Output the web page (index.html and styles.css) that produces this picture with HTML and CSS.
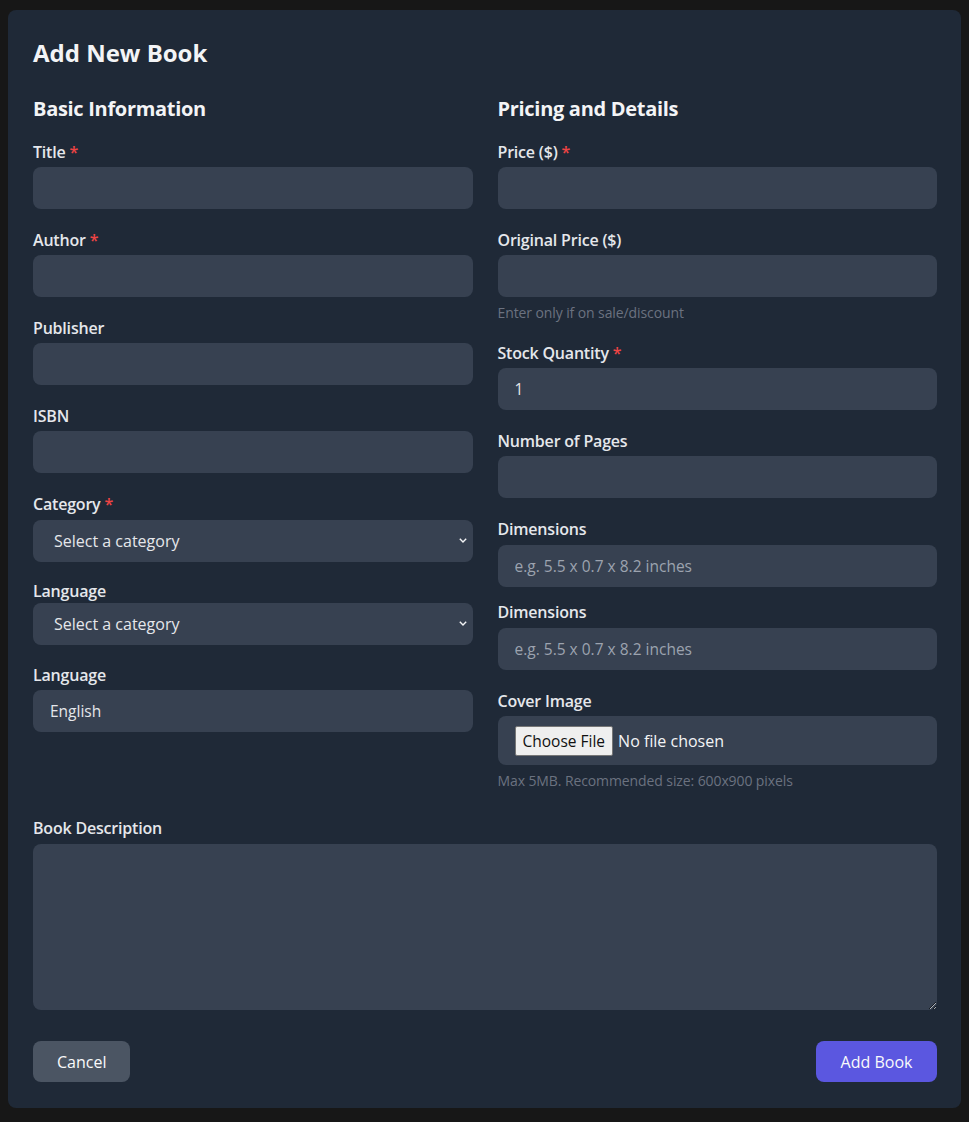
FILE: index.html
```html
<!DOCTYPE html>
<html lang="en">
<head>
<meta charset="utf-8">
<title>Add New Book</title>
<link rel="stylesheet" href="styles.css">
</head>
<body>
<div class="card">
  <h1 class="title">Add New Book</h1>
  <form class="form">
    <div class="cols">
      <div class="col">
        <h2 class="section">Basic Information</h2>
        <div class="field">
          <label class="label">Title <span class="req">*</span></label>
          <input class="input" type="text">
        </div>
        <div class="field">
          <label class="label">Author <span class="req">*</span></label>
          <input class="input" type="text">
        </div>
        <div class="field">
          <label class="label">Publisher</label>
          <input class="input" type="text">
        </div>
        <div class="field">
          <label class="label">ISBN</label>
          <input class="input" type="text">
        </div>
        <div class="field f-cat">
          <label class="label">Category <span class="req">*</span></label>
          <select class="select"><option>Select a category</option></select>
        </div>
        <div class="field f-lang1">
          <label class="label">Language</label>
          <select class="select"><option>Select a category</option></select>
        </div>
        <div class="field f-lang2">
          <label class="label">Language</label>
          <input class="input" type="text" value="English">
        </div>
      </div>
      <div class="col">
        <h2 class="section">Pricing and Details</h2>
        <div class="field">
          <label class="label">Price ($) <span class="req">*</span></label>
          <input class="input" type="text">
        </div>
        <div class="field f-orig">
          <label class="label">Original Price ($)</label>
          <input class="input" type="text">
          <p class="help">Enter only if on sale/discount</p>
        </div>
        <div class="field">
          <label class="label">Stock Quantity <span class="req">*</span></label>
          <input class="input" type="text" value="1">
        </div>
        <div class="field">
          <label class="label">Number of Pages</label>
          <input class="input" type="text">
        </div>
        <div class="field f-dim1">
          <label class="label">Dimensions</label>
          <input class="input" type="text" placeholder="e.g. 5.5 x 0.7 x 8.2 inches">
        </div>
        <div class="field f-dim2">
          <label class="label">Dimensions</label>
          <input class="input" type="text" placeholder="e.g. 5.5 x 0.7 x 8.2 inches">
        </div>
        <div class="field f-cover">
          <label class="label">Cover Image</label>
          <input class="input file" type="file">
          <p class="help help-cover">Max 5MB. Recommended size: 600x900 pixels</p>
        </div>
      </div>
    </div>
    <div class="field f-desc">
      <label class="label">Book Description</label>
      <textarea class="textarea"></textarea>
    </div>
    <div class="actions">
      <button type="button" class="btn btn-cancel">Cancel</button>
      <button type="button" class="btn btn-primary">Add Book</button>
    </div>
  </form>
</div>
</body>
</html>
```

FILE: styles.css
```css
* { box-sizing: border-box; }
html, body { margin: 0; padding: 0; }
body {
  background: #171717;
  font-family: "Open Sans", "Noto Sans", sans-serif;
  color: #e5e7eb;
  padding: 10px 8px 14px 8px;
}
.card {
  background: #1f2937;
  border-radius: 8px;
  padding: 27px 24px 26px 25px;
}
.title {
  margin: 0 0 26px 0;
  font-size: 24px;
  line-height: 32px;
  font-weight: 700;
  color: #f3f4f6;
}
.section {
  margin: 0 0 17px 0;
  font-size: 20px;
  line-height: 28px;
  font-weight: 700;
  color: #f3f4f6;
  letter-spacing: -0.3px;
}
.cols {
  display: grid;
  grid-template-columns: 1fr 1fr;
  column-gap: 25px;
}
.col { display: flex; flex-direction: column; }
.field {
  display: flex;
  flex-direction: column;
  margin-bottom: 19px;
}
.label {
  display: block;
  font-size: 16px;
  line-height: 24px;
  font-weight: 600;
  color: #e5e7eb;
  margin-bottom: 3px;
  letter-spacing: -0.2px;
}
.req { color: #ef4444; }
.input, .select, .textarea {
  width: 100%;
  height: 42px;
  background: #374151;
  border: none;
  border-radius: 8px;
  color: #e5e7eb;
  font-family: inherit;
  font-size: 15.5px;
  padding: 0 17px;
  outline: none;
}
.input::placeholder { color: #9ca3af; }
.select {
  height: 41.5px;
  appearance: none;
  -webkit-appearance: none;
  padding: 0 21px;
  font-size: 16px;
  background-image: url("data:image/svg+xml;utf8,<svg xmlns='http://www.w3.org/2000/svg' width='10' height='7' viewBox='0 0 10 7'><path d='M1.8 1.8 L5 5 L8.2 1.8' fill='none' stroke='%23f3f4f6' stroke-width='1.4'/></svg>");
  background-repeat: no-repeat;
  background-position: right 5px center;
}
.f-cat { margin-bottom: 17.5px; }
.f-cat .label { margin-bottom: 4px; }
.f-lang1 { margin-bottom: 18px; }
.f-lang1 .label { margin-bottom: 0; }
.f-lang2 .label { margin-bottom: 3px; }
.help {
  margin: 6px 0 0 0;
  font-size: 14px;
  line-height: 20px;
  color: #6b7280;
  letter-spacing: -0.1px;
}
.f-orig { margin-bottom: 18px; }
.f-dim1 .label, .f-dim2 .label { margin-bottom: 4px; }
.f-dim1 { margin-bottom: 13px; }
.f-cover { margin-bottom: 25px; }
.file {
  height: 49px;
  padding: 10px 17px;
  font-size: 16px;
  color: #f3f4f6;
}
.file::file-selector-button {
  font-family: inherit;
  font-size: 15.5px;
  background: #efefef;
  color: #111;
  border: 1px solid #767676;
  border-radius: 2px;
  padding: 3px 7px;
  margin-right: 5px;
  height: 30px;
}
.help-cover { margin-top: 6px; }
.f-desc { margin-bottom: 31px; }
.f-desc .label { margin-bottom: 4px; }
.textarea {
  height: 166px;
  padding: 10px 17px;
  resize: vertical;
}
.actions {
  display: flex;
  justify-content: space-between;
}
.btn {
  height: 41px;
  border: none;
  border-radius: 8px;
  font-family: inherit;
  font-size: 16px;
  color: #f9fafb;
  padding: 0 24px;
}
.btn-cancel { background: #4b5563; width: 97px; }
.btn-primary { background: #5b57e0; width: 121px; }
```
